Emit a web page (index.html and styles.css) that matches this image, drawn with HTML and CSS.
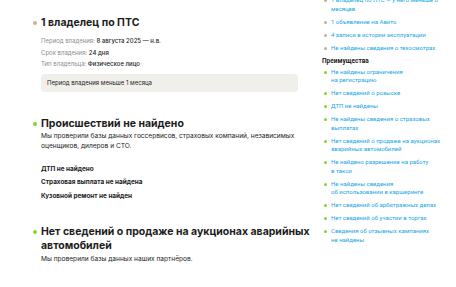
FILE: index.html
```html
<!DOCTYPE html>
<html lang="ru">
<head>
  <meta charset="UTF-8" />
  <title>Отчёт по автомобилю</title>
  <link rel="stylesheet" href="styles.css">
</head>
<body>

<div class="page">
  <div class="main">

    <section class="block">
      <h3 class="block-title tan">1 владелец по ПТС</h3>
      <div class="facts">
        <p><span class="label">Период владения:</span> 8 августа 2025 — н.в.</p>
        <p><span class="label">Срок владения:</span> 24 дня</p>
        <p><span class="label">Тип владельца:</span> Физическое лицо</p>
      </div>
      <div class="note">Период владения меньше 1 месяца</div>
    </section>

    <section class="block">
      <h3 class="block-title green">Происшествий не найдено</h3>
      <p class="lead">Мы проверили базы данных госсервисов, страховых компаний, независимых оценщиков, дилеров и СТО.</p>
      <ul class="checks">
        <li>ДТП не найдено</li>
        <li>Страховая выплата не найдена</li>
        <li>Кузовной ремонт не найден</li>
      </ul>
    </section>

    <section class="block">
      <h3 class="block-title green">Нет сведений о продаже на аукционах аварийных автомобилей</h3>
      <p class="lead">Мы проверили базы данных наших партнёров.</p>
    </section>

  </div>

  <aside class="side">
    <ul class="side-list tan">
      <li>1 владелец по ПТС — у него меньше 6<br>месяцев</li>
      <li>1 объявление на Авито</li>
      <li>4 записи в истории эксплуатации</li>
      <li>Не найдены сведения о техосмотрах</li>
    </ul>

    <h4 class="side-title">Преимущества</h4>
    <ul class="side-list green">
      <li>Не найдены ограничения<br>на регистрацию</li>
      <li>Нет сведений о розыске</li>
      <li>ДТП не найдены</li>
      <li>Не найдены сведения о страховых<br>выплатах</li>
      <li>Нет сведений о продаже на аукционах<br>аварийных автомобилей</li>
      <li>Не найдено разрешение на работу<br>в такси</li>
      <li>Не найдены сведения<br>об использовании в каршеринге</li>
      <li>Нет сведений об арбитражных делах</li>
      <li>Нет сведений об участии в торгах</li>
      <li>Сведения об отзывных кампаниях<br>не найдены</li>
    </ul>
  </aside>
</div>

</body>
</html>
```

FILE: styles.css
```css
body { margin: 0; background: #fff; color: #1c1c1c; font-family: Inter, 'Noto Sans', sans-serif; }
p, ul, h3, h4 { margin: 0; padding: 0; }
ul { list-style: none; }

.page { display: flex; align-items: flex-start; }

.main { width: 282px; padding: 16px 0 0 33px; }
.side { width: 134px; margin-left: 7px; margin-top: -4px; font-family: Roboto, 'Noto Sans', sans-serif; }

/* левая колонка */
.block { margin-bottom: 25px; }
.block:nth-child(2) { margin-bottom: 22px; }
.block-title {
  position: relative;
  padding-left: 8px;
  font-size: 10.5px; line-height: 14px; font-weight: 700;
}
.block-title::before {
  content: ""; position: absolute; left: 0; top: 5px;
  width: 4px; height: 4px; border-radius: 50%;
}
.block-title.tan::before { background: #c6b78f; }
.block-title.green::before { background: #89d13a; }

.facts { padding-left: 8px; margin-top: 5px; }
.facts p { font-size: 6px; line-height: 11.5px; font-weight: 500; }
.label { color: #8e8e8e; font-weight: 400; }

.note {
  margin: 4px 17px 0 8px;
  padding: 5px 6px;
  background: #f1efea; border-radius: 4px;
  font-size: 6px; line-height: 8px;
}

.lead { padding-left: 8px; font-size: 6.6px; line-height: 10px; }
.block-title + .lead { margin-top: 0; }
.block:last-child .lead { margin-top: 1px; }

.checks { padding-left: 8px; margin-top: 12px; }
.checks li { font-size: 6.4px; line-height: 13.5px; font-weight: 700; }

/* правая колонка */
.side-title { font-size: 6.5px; line-height: 9px; font-weight: 700; margin: 3px 0 2px; }
.side-list li {
  position: relative;
  padding-left: 9px; margin-bottom: 4.5px;
  font-size: 6px; line-height: 8.5px;
  color: #15a6e6;
}
.side-list li::before {
  content: ""; position: absolute; left: 1.5px; top: 3px;
  width: 3px; height: 3px; border-radius: 50%;
}
.side-list.tan li::before { background: #c2b38b; }
.side-list.green li::before { background: #89d13a; }
```
